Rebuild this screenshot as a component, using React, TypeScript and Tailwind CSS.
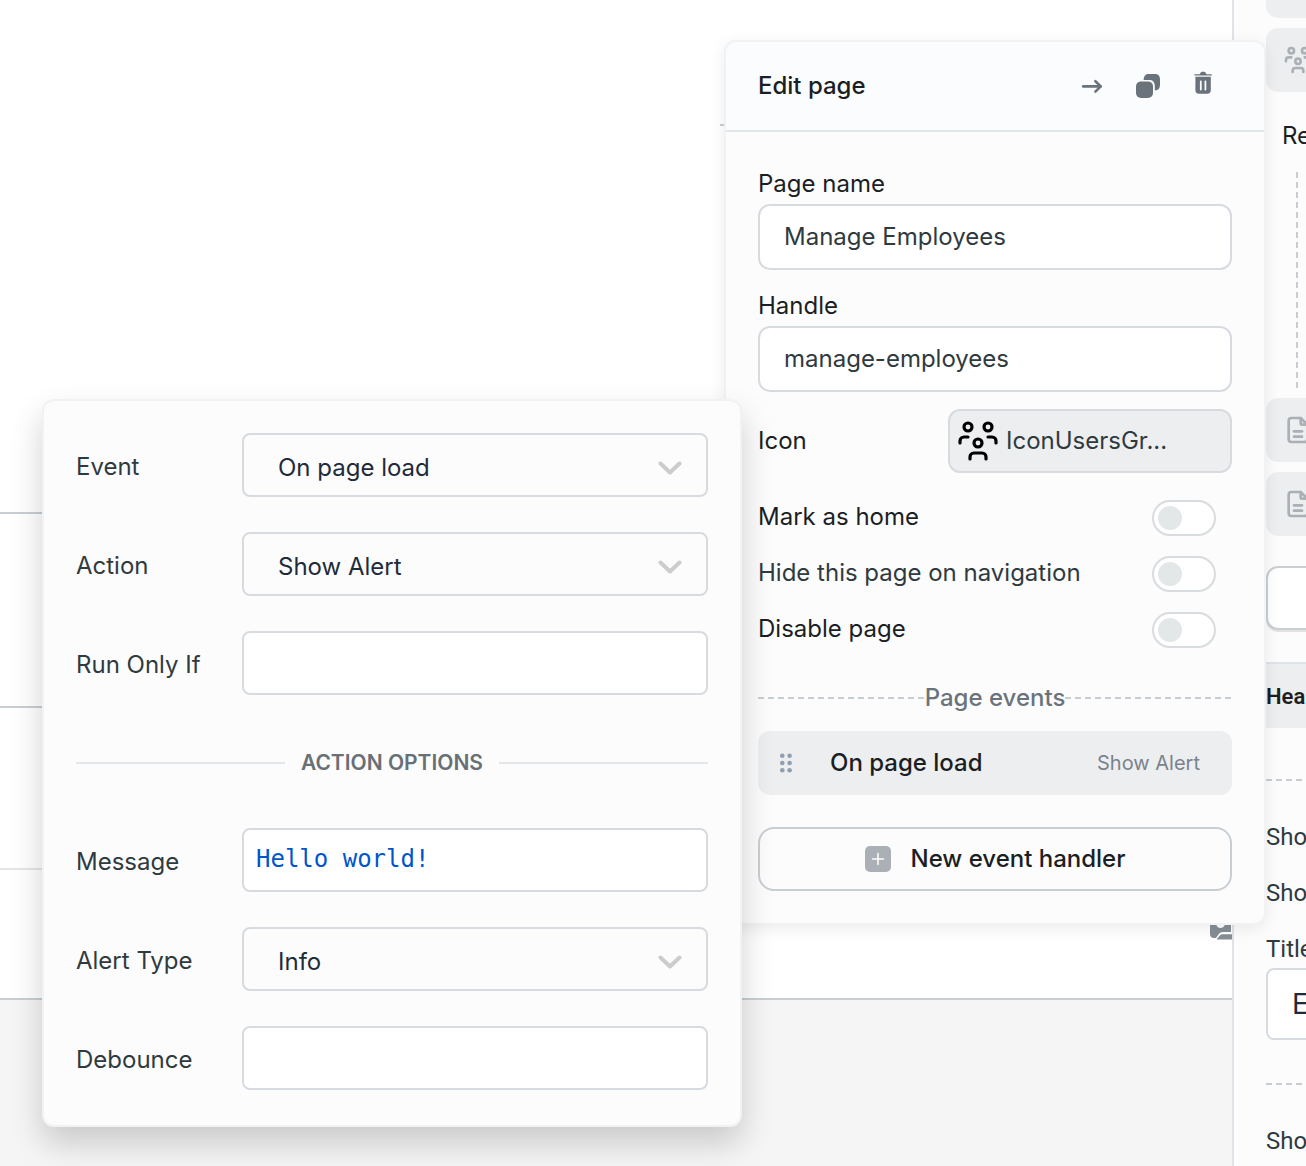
import React from "react";

function UsersGroupIcon({ className }: { className: string }) {
  return (
    <svg viewBox="0 0 24 24" fill="none" stroke="currentColor" strokeLinecap="round" strokeLinejoin="round" className={className} aria-hidden="true">
      <path d="M10 13a2 2 0 1 0 4 0a2 2 0 0 0 -4 0" />
      <path d="M8 21v-1a2 2 0 0 1 2 -2h4a2 2 0 0 1 2 2v1" />
      <path d="M15 5a2 2 0 1 0 4 0a2 2 0 0 0 -4 0" />
      <path d="M17 10h2a2 2 0 0 1 2 2v1" />
      <path d="M5 5a2 2 0 1 0 4 0a2 2 0 0 0 -4 0" />
      <path d="M3 13v-1a2 2 0 0 1 2 -2h2" />
    </svg>
  );
}

function FileIcon({ className }: { className: string }) {
  return (
    <svg viewBox="0 0 24 24" fill="none" stroke="currentColor" strokeWidth="2" strokeLinecap="round" strokeLinejoin="round" className={className} aria-hidden="true">
      <path d="M14 3v4a1 1 0 0 0 1 1h4" />
      <path d="M17 21h-10a2 2 0 0 1 -2 -2v-14a2 2 0 0 1 2 -2h7l5 5v11a2 2 0 0 1 -2 2z" />
      <path d="M9 17h6" />
      <path d="M9 13h6" />
    </svg>
  );
}

function ArrowIcon() {
  return (
    <svg viewBox="0 0 24 24" className="size-6" fill="none" stroke="currentColor" strokeWidth="2.6" strokeLinecap="round" strokeLinejoin="round" aria-hidden="true">
      <path d="M3.2 12.4H20.6" />
      <path d="M15.4 7.2L20.7 12.4L15.4 17.6" />
    </svg>
  );
}

function CopyIcon() {
  return (
    <svg viewBox="0 0 24 24" className="size-6" fill="currentColor" aria-hidden="true">
      <path d="M7.6 5.9C7.9 2 9.5 0 13 0H18.5C22.2 0 24 1.8 24 5.5V11C24 14.4 22.2 16.2 18.8 16.5V12C18.8 7.8 16.7 5.9 12.8 5.9Z" />
      <rect x="0" y="7.4" width="17" height="16.6" rx="5" />
    </svg>
  );
}

function TrashIcon() {
  return (
    <svg viewBox="0 0 24 24" className="size-6" aria-hidden="true">
      <path fill="currentColor" d="M3 3.2Q2.3 3.2 2.3 3.9Q2.3 4.6 3 4.6H19.2Q19.9 4.6 19.9 3.9Q19.9 3.2 19.2 3.2H14.6Q13.6 0.6 11.1 0.6Q8.6 0.6 7.6 3.2Z" />
      <path fill="currentColor" d="M3.4 5.8H18.8V19Q18.8 22.8 15.2 22.8H7Q3.4 22.800 3.4 19Z" />
      <path d="M8.8 10.300V18.600M13.4 10.300V18.600" stroke="#fbfcfe" strokeWidth="1.8" strokeLinecap="round" />
    </svg>
  );
}

function PuzzleIcon() {
  return (
    <svg viewBox="0 0 24 24" className="h-6 w-[23px]" preserveAspectRatio="xMinYMin slice" fill="currentColor" aria-hidden="true">
      <path d="M1 2H7V8.500Q8.500 12 11.500 12Q14.500 12 16 8.500V2H22V16H13.500Q10.500 16 9.300 18.800L7 22H5Q1 22 1 18Z" />
      <path d="M7.500 23.500L10.800 19.500Q11.800 18.200 14 18.200H24V23.500Z" />
    </svg>
  );
}

function Chevron() {
  return (
    <svg viewBox="0 0 24 14" className="pointer-events-none absolute top-7 right-[26px] h-[14px] w-6" fill="none" stroke="#cccccc" strokeWidth="4" strokeLinecap="round" strokeLinejoin="round" aria-hidden="true">
      <path d="M2.5 2.5L12 11.500L21.5 2.5" />
    </svg>
  );
}

const popRow = "grid grid-cols-[166px_1fr] items-center";

function SelectRow({ id, label, value }: { id: string; label: string; value: string }) {
  return (
    <div className={popRow}>
      <label htmlFor={id} className="pt-1 text-[#2f3a3f]">{label}</label>
      <div className="relative">
        <select id={id} defaultValue={value} className="h-16 w-full appearance-none rounded-lg border-2 border-[#d7dbdf] bg-[#fcfcfd] pt-1.5 pl-[34px] text-[#1f2b3a] outline-none">
          <option>{value}</option>
        </select>
        <Chevron />
      </div>
    </div>
  );
}

function TextRow({ id, label, value }: { id: string; label: string; value: string }) {
  return (
    <div className={popRow}>
      <label htmlFor={id} className="pt-1 text-[#2f3a3f]">{label}</label>
      <input id={id} type="text" defaultValue={value} className="h-16 w-full rounded-lg border-2 border-[#d7dbdf] bg-white px-3 pb-0.5 font-['DejaVu_Sans_Mono','Liberation_Mono',monospace] text-[#0055cc] outline-none" />
    </div>
  );
}

function EventPopover() {
  return (
    <section aria-label="Event" className="absolute top-[399px] right-[564px] z-20 w-[700px] rounded-xl border-2 border-[#f1f2f3] bg-[#fcfcfd] px-8 pt-8 pb-[35px] shadow-[0_16px_32px_rgba(0,0,0,0.18)]">
      <div className="flex flex-col gap-[35px]">
        <SelectRow id="event" label="Event" value="On page load" />
        <SelectRow id="action" label="Action" value="Show Alert" />
        <TextRow id="run-only-if" label="Run Only If" value="" />
        <div className="flex h-[63px] items-center gap-4 pt-0.5">
          <span className="h-0.5 flex-1 bg-[#e4e7ea]" />
          <span className="text-[21px] font-semibold text-[#687076]">ACTION OPTIONS</span>
          <span className="h-0.5 flex-1 bg-[#e4e7ea]" />
        </div>
        <TextRow id="message" label="Message" value="Hello world!" />
        <SelectRow id="alert-type" label="Alert Type" value="Info" />
        <TextRow id="debounce" label="Debounce" value="" />
      </div>
    </section>
  );
}

function PageField({ id, label, value }: { id: string; label: string; value: string }) {
  return (
    <div className="flex flex-col gap-1">
      <label htmlFor={id} className="text-[#1b1f24]">{label}</label>
      <input id={id} type="text" defaultValue={value} className="h-[66px] w-full rounded-xl border-2 border-[#d7dbdf] bg-white px-6 pb-0.5 text-[#2f3a3f] outline-none" />
    </div>
  );
}

function ToggleRow({ id, label, className }: { id: string; label: string; className: string }) {
  return (
    <div className="flex h-14 items-center justify-between pr-4">
      <label htmlFor={id} className={className}>{label}</label>
      <input id={id} type="checkbox" className="relative mt-0.5 h-9 w-16 appearance-none rounded-full border-2 border-[#d9dcde] bg-white before:absolute before:top-1 before:left-1 before:size-6 before:rounded-full before:bg-[#e4e7e8]" />
    </div>
  );
}

function GripIcon() {
  return (
    <svg viewBox="0 0 12 20" className="h-5 w-3" fill="#8f9fae" aria-hidden="true">
      {[2.7, 10, 17.3].map((y) => (
        <React.Fragment key={y}>
          <circle cx="2.3" cy={y} r="2.3" />
          <circle cx="9.6" cy={y} r="2.3" />
        </React.Fragment>
      ))}
    </svg>
  );
}

function PagePanel() {
  return (
    <section aria-label="Edit page" className="absolute top-10 right-10 z-10 w-[542px] overflow-hidden rounded-xl border-2 border-[#f0f2f4] bg-[#fcfcfd] shadow-[0_4px_16px_rgba(0,0,0,0.08)]">
      <header className="flex h-[90px] items-center justify-between border-b-2 border-[#e1e5ea] bg-[#fbfcfe] pr-12 pl-8">
        <h2 className="font-medium text-[#1b1f24]">Edit page</h2>
        <div className="flex items-center gap-8 text-[#6a727c]">
          <button type="button" aria-label="Go to page"><ArrowIcon /></button>
          <button type="button" aria-label="Duplicate page"><CopyIcon /></button>
          <button type="button" aria-label="Delete page" className="mb-1.5"><TrashIcon /></button>
        </div>
      </header>
      <div className="px-8 pt-9 pb-8">
        <div className="flex flex-col gap-5">
          <PageField id="page-name" label="Page name" value="Manage Employees" />
          <PageField id="handle" label="Handle" value="manage-employees" />
        </div>
        <div className="mt-[17px] mb-4 flex items-center justify-between">
          <span className="text-[#1b1f24]">Icon</span>
          <button type="button" className="flex h-16 w-[284px] items-center gap-1 rounded-xl border-2 border-[#d7dbdf] bg-[#edeef0] pl-1 text-[#2f3a3f]">
            <UsersGroupIcon className="size-12 stroke-[1.6] text-black" />
            IconUsersGr...
          </button>
        </div>
        <ToggleRow id="home" label="Mark as home" className="text-[#1b1f24]" />
        <ToggleRow id="hide" label="Hide this page on navigation" className="text-[#2f3a3f]" />
        <ToggleRow id="disable" label="Disable page" className="text-[#1b1f24]" />
        <div className="mt-[25px] mb-[17px] flex items-center">
          <span className="h-0.5 flex-1 bg-[repeating-linear-gradient(to_right,#c7cdd2_0_6px,transparent_6px_10px)]" />
          <h3 className="font-medium text-[#6a737c]">Page events</h3>
          <span className="h-0.5 flex-1 bg-[repeating-linear-gradient(to_right,#c7cdd2_0_6px,transparent_6px_10px)]" />
        </div>
        <button type="button" className="flex h-16 w-full items-center rounded-xl bg-[#edeef0] pr-8 pl-[22px]">
          <GripIcon />
          <span className="ml-[38px] font-medium text-[#1b1f24]">On page load</span>
          <span className="ml-auto text-xl text-[#7a838c]">Show Alert</span>
        </button>
        <button type="button" className="mt-8 flex h-16 w-full items-center justify-center gap-5 rounded-2xl border-2 border-[#c9ced3] font-medium text-[#1b1f24]">
          <svg viewBox="0 0 26 26" className="size-[26px]" aria-hidden="true">
            <rect width="26" height="26" rx="5" fill="#abb0b6" />
            <path d="M13 7.5V18.500M7.5 13H18.500" stroke="#fcfcfd" strokeWidth="1.6" strokeLinecap="round" />
          </svg>
          New event handler
        </button>
      </div>
    </section>
  );
}

const sideText = "flex h-14 items-center font-[Roboto,sans-serif] text-[#2f3a3f]";
const dashed = "h-0.5 bg-[repeating-linear-gradient(to_right,#c7cdd2_0_6px,transparent_6px_10px)]";
const sideItem = "flex h-16 shrink-0 items-center rounded-xl bg-[#edeef0] pl-4";

function Sidebar() {
  return (
    <aside className="w-[74px] shrink-0 overflow-hidden border-l-2 border-[#e0e4e9] bg-[#fcfcfd]">
      <div className="flex flex-col pl-8">
        <div className="h-[18px] rounded-bl-xl bg-[#edeef0]" />
        <div className={"mt-2.5 w-80 " + sideItem}><UsersGroupIcon className="size-8 stroke-2 text-[#abb0b6]" /></div>
        <div className="mt-7 pl-4 text-[#1b1f24]">Re</div>
        <div className="mt-5 ml-[30px] h-[216px] w-0.5 bg-[repeating-linear-gradient(to_bottom,#c7cdd2_0_6px,transparent_6px_10px)]" />
        <div className={"mt-2.5 w-80 " + sideItem}><FileIcon className="size-8 text-[#abb0b6]" /></div>
        <div className={"mt-2.5 w-80 " + sideItem}><FileIcon className="size-8 text-[#abb0b6]" /></div>
        <button type="button" aria-label="Add" className="mt-[30px] h-16 w-80 rounded-xl border-2 border-[#c9ced3] bg-white shadow-[0_2px_0_rgba(0,0,0,0.1)]" />
      </div>
      <h3 className="mt-8 flex h-[66px] items-center border-t-2 border-[#dfe3e6] bg-[#edeef0] pt-0.5 pl-8 font-[Roboto,sans-serif] text-[22px] font-semibold text-[#1b1f24]">Hea</h3>
      <div className="flex flex-col pl-8">
        <div className={"mt-[51px] mb-7 " + dashed} />
        <div className={sideText}>Sho</div>
        <div className={sideText}>Sho</div>
        <label htmlFor="title" className="mt-3 h-[35px] font-[Roboto,sans-serif] text-[#2f3a3f]">Title</label>
        <input id="title" type="text" defaultValue="E" className="h-[72px] w-80 rounded-lg border-2 border-[#d7dbdf] bg-white px-6 text-[28px] text-[#1f2b3a] outline-none" />
        <div className={"mt-[43px] mb-7 " + dashed} />
        <div className={sideText}>Sho</div>
      </div>
    </aside>
  );
}

function Canvas() {
  return (
    <main className="flex min-w-0 flex-1 flex-col bg-white">
      <div className="h-[514px] border-b-2 border-[#c9ced3] pt-[124px] pr-[508px]">
        <div className="ml-auto h-0.5 w-1 bg-[#c9ced3]" />
      </div>
      <div className="h-[194px] border-b-2 border-[#c9ced3]" />
      <div className="h-[162px] border-b-2 border-[#e4e5e7]" />
      <div className="flex h-[130px] justify-end border-b-2 border-[#c9ced3] pt-[46px] text-[#868e96]">
        <PuzzleIcon />
      </div>
      <div className="flex-1 bg-[#f5f5f5]" />
    </main>
  );
}

export default function App() {
  return (
    <div className="relative flex h-screen overflow-hidden font-[Inter,sans-serif] text-2xl">
      <Canvas />
      <Sidebar />
      <PagePanel />
      <EventPopover />
    </div>
  );
}
